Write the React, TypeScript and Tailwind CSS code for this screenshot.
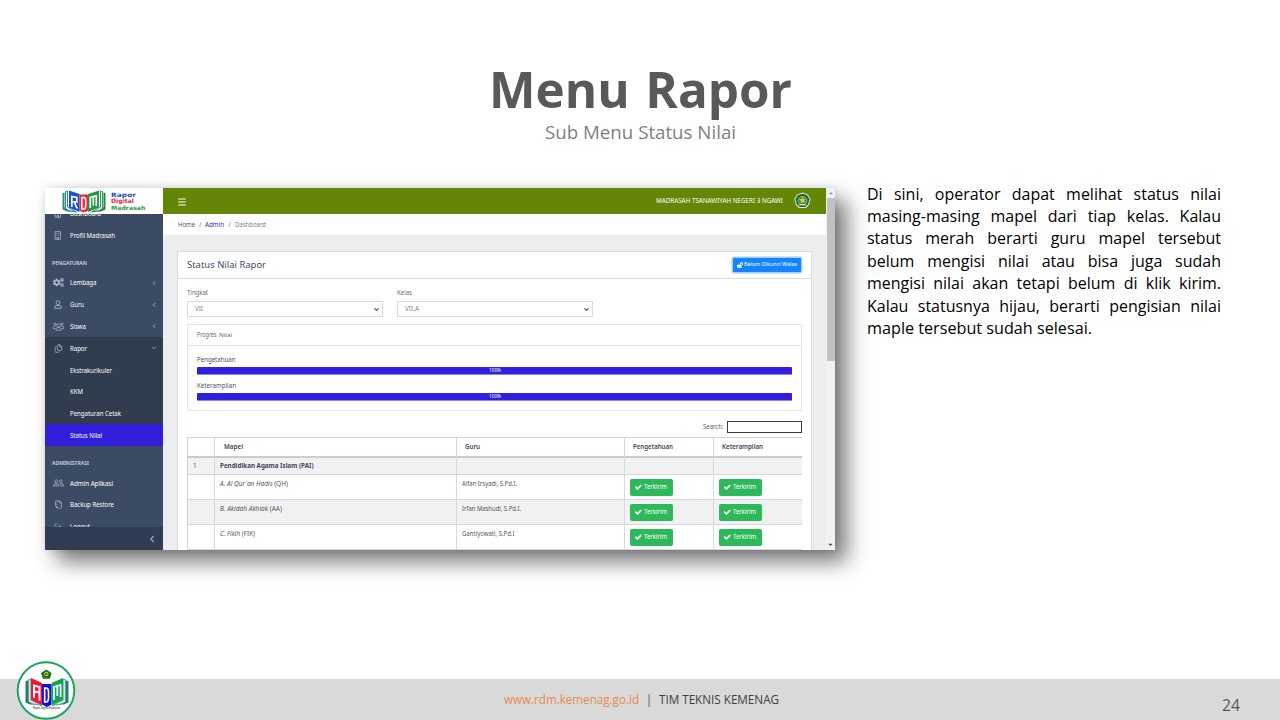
import { useLayoutEffect, useRef, useState } from "react";
import type { ReactNode } from "react";
import { ChevronDown, ChevronLeft, FileArchive, Files, LogOut, Menu } from "lucide-react";
import { FaCheck, FaLockOpen, FaCaretDown, FaCaretUp, FaCogs } from "react-icons/fa";

/** Single line of text, condensed or widened to a fixed measure. */
function Fit({ w, className = "", children }: { w: number; className?: string; children: ReactNode }) {
  const ref = useRef<HTMLSpanElement>(null);
  const [s, setS] = useState(1);
  useLayoutEffect(() => {
    if (ref.current) setS(w / ref.current.getBoundingClientRect().width);
  }, []);
  return (
    <span className={"block shrink-0 whitespace-nowrap " + className} style={{ width: w }}>
      <span ref={ref} className="inline-block origin-left" style={s === 1 ? undefined : { transform: `scaleX(${s})` }}>
        {children}
      </span>
    </span>
  );
}

function BuildingIcon() {
  return (
    <svg viewBox="0 0 16 20" className="h-[9px] w-[7.500px]" fill="none" stroke="currentColor" strokeWidth="1.900">
      <path d="M2 1.500h12v17H2zM6.500 18v-4h3v4" />
      <path d="M5 5.500h2M9 5.500h2M5 9.500h2M9 9.500h2" />
    </svg>
  );
}

function Person() {
  return (
    <svg viewBox="0 0 18 20" className="h-[9px] w-[8px]" fill="none" stroke="currentColor" strokeWidth="2">
      <rect x="5" y="1.500" width="8" height="9" rx="3.800" />
      <path d="M1.500 18.500v-2.500q0-3.500 4-3.500h7q4 0 4 3.500v2.500z" />
    </svg>
  );
}

function Duo() {
  return (
    <svg viewBox="0 0 28 20" className="h-[8px] w-[11px]" fill="none" stroke="currentColor" strokeWidth="2">
      <rect x="5" y="2" width="6.500" height="8" rx="3.200" />
      <rect x="16.500" y="2" width="6.500" height="8" rx="3.200" />
      <path d="M1.500 17.500v-2q0-3 3.500-3h6q3.500 0 3.500 3v2zM17 12.500h6q3.500 0 3.500 3v2H18" />
    </svg>
  );
}

function Trio() {
  return (
    <svg viewBox="0 0 30 24" className="h-[9px] w-[11px]" fill="none" stroke="currentColor" strokeWidth="2.200">
      <circle cx="15" cy="9" r="4.500" />
      <circle cx="5.500" cy="5.500" r="3" />
      <circle cx="24.500" cy="5.500" r="3" />
      <path d="M8 22v-3q0-4 4-4h6q4 0 4 4v3zM6 18H1v-4q0-3 4-3h2M24 18h5v-4q0-3-4-3h-2" />
    </svg>
  );
}

function Row({ icon, label, w, arrow, className = "" }: { icon?: ReactNode; label: string; w: number; arrow?: ReactNode; className?: string }) {
  return (
    <div className={"flex h-[21.8px] shrink-0 items-center pl-[7px] pr-[6px] text-white " + className}>
      <span className="flex w-[18px] shrink-0 justify-start text-[#aab3c0]">
        <span className="flex w-[12px] justify-center">{icon}</span>
      </span>
      <Fit w={w} className="mt-[1.500px] text-[6.400px] leading-none">{label}</Fit>
      <span className="ml-auto text-[#b5bdc9]">{arrow}</span>
    </div>
  );
}

function Section({ label, w }: { label: string; w: number }) {
  return (
    <div className="flex h-[25.800px] shrink-0 items-center pl-[7px] pt-[9px] text-[#d3d8df]">
      <Fit w={w} className="text-[5.200px] font-semibold leading-none">{label}</Fit>
    </div>
  );
}

function BookLogo() {
  return (
    <svg viewBox="0 0 44 24" className="h-[24px] w-[44px]">
      <path d="M.5 4l2-.5v15l11 4H5l-4.500-2z" fill="#2c8a87" />
      <path d="M3.500 2.500l2-.5v16l9 5-8-1.500-3-2z" fill="#e2f3f0" stroke="#29788d" strokeWidth=".9" />
      <path d="M43.500 4l-2-.5v15l-11 4H39l4.500-2z" fill="#178b53" />
      <path d="M40.500 2.500l-2-.5v16l-9 5 8-1.500 3-2z" fill="#dff3e6" stroke="#26854d" strokeWidth=".9" />
      <path d="M7 1.500l10.500 3.500v18L7 18.500z" fill="#1552d5" />
      <path d="M17.500 5.500h8.500v16.500l-4.200 1.500-4.300-1.500z" fill="#e6303c" />
      <path d="M26 5l11-3.500v17L26 23z" fill="#219a45" />
      <path d="M9.800 18V7.500l5 1v4.500l-5-.5m2.500.5l2.800 6.500" fill="none" stroke="#fff" strokeWidth="1.700" />
      <path d="M19.800 8.500h1.700q2.200 0 2.200 3v5q0 3.500-2.200 3.500h-1.700z" fill="none" stroke="#fff" strokeWidth="1.500" />
      <path d="M28.300 19V8.300l3-.8v9m0-9l3-.8V17" fill="none" stroke="#fff" strokeWidth="1.600" />
    </svg>
  );
}

function Emblem() {
  return (
    <svg viewBox="0 0 18 18" className="h-[17px] w-[17px]">
      <path d="M9 1l5.500 2.300 2.500 4.200-1.500 6-3 2.800h-7l-3-2.800L1 7.500l2.500-4.200z" fill="#17652d" stroke="#e3edd0" strokeWidth="1.100" />
      <circle cx="9" cy="9.300" r="4.600" fill="#447f3b" stroke="#b9cda0" strokeWidth=".9" />
      <path d="M9 5l1 2.500 2.500.2-1.800 1.800.6 2.500L9 10.800 6.700 12l.6-2.500-1.800-1.800L8 7.500z" fill="#d9cc54" />
      <path d="M5 14q4-1.500 8 0" fill="none" stroke="#e7eccf" strokeWidth="1.200" />
    </svg>
  );
}

function Seal() {
  return (
    <svg viewBox="0 0 60 60" className="h-[60px] w-[60px]">
      <circle cx="30" cy="30.500" r="28.300" fill="#fff" stroke="#17a65b" strokeWidth="1.900" />
      <path d="M9.500 21l2.500-.5v20l14 4H14l-4.500-2zM52.500 21l-2.500-.5v20l-14 4h12l4.500-2z" fill="#267b7a" />
      <path d="M12.500 19.500l2.500-.5v21l11 5.500-9-1.500-4.500-2zM49.500 19.500l-2.500-.5v21l-11 5.500 9-1.500 4.500-2z" fill="#cce8dc" stroke="#3b948c" strokeWidth=".8" />
      <path d="M15 18l11 5v22l-11-5z" fill="#ef1835" />
      <path d="M26 24h9.500v20.500L31 47l-5-2.500z" fill="#170be6" />
      <path d="M35.500 23L47 18v22l-11.500 5z" fill="#10a350" />
      <path d="M18 38V25.500l5.500 1.500v13.500M18 31.500l5.500 1" fill="none" stroke="#fff" strokeWidth="1.900" />
      <path d="M28.700 28h1.300q2.500 0 2.500 3.500v6q0 4.500-2.500 4.500h-1.300z" fill="none" stroke="#fff" strokeWidth="1.600" />
      <path d="M38 40V27l3.300-1v10m0-10l3.300-1V37" fill="none" stroke="#fff" strokeWidth="1.700" />
      <path d="M30.300 9.500l5.300 3.600-1.700 5.700h-7L25 13.100z" fill="#167425" />
      <circle cx="30.300" cy="14" r="2.200" fill="#c5bd28" />
      <circle cx="30.300" cy="14" r="1.100" fill="#167425" />
      <text x="30.500" y="49.300" textAnchor="middle" fontSize="2.600" fontFamily="Liberation Sans" fill="#222">Rapor Digital Madrasah</text>
    </svg>
  );
}

function Sidebar() {
  return (
    <aside className="flex w-[118px] shrink-0 flex-col bg-[#3c4b64]">
      <div className="flex h-[26px] shrink-0 items-center gap-[4.500px] bg-white pl-[17px]">
        <BookLogo />
        <div className="flex flex-col pt-[1px] text-[6px] font-bold leading-[6.500px]" style={{ fontFamily: "'DejaVu Sans', sans-serif" }}>
          <Fit w={25} className="text-[#204bbd]">Rapor</Fit>
          <Fit w={23} className="text-[#e12a34]">Digital</Fit>
          <Fit w={34.500} className="text-[#2b9a3f]">Madrasah</Fit>
        </div>
      </div>
      <nav className="flex h-[313px] shrink-0 flex-col overflow-hidden">
        <Row icon={<BuildingIcon />} label="Dashboard" w={31} className="-mt-[11.500px]" />
        <Row icon={<BuildingIcon />} label="Profil Madrasah" w={45} />
        <Section label="PENGATURAN" w={35} />
        <Row icon={<FaCogs size={11} />} label="Lembaga" w={26.500} arrow={<ChevronLeft size={6} strokeWidth={3} />} />
        <Row icon={<Person />} label="Guru" w={14} arrow={<ChevronLeft size={6} strokeWidth={3} />} />
        <Row icon={<Trio />} label="Siswa" w={16} arrow={<ChevronLeft size={6} strokeWidth={3} />} />
        <div className="flex shrink-0 flex-col bg-[#303c50]">
          <Row icon={<Files size={9} />} label="Rapor" w={17} arrow={<ChevronDown size={6} strokeWidth={3} />} />
          <Row label="Ekstrakurikuler" w={42} />
          <Row label="KKM" w={13} />
          <Row label="Pengaturan Cetak" w={51} />
          <Row label="Status Nilai" w={32} className="bg-[#321fdb]" />
        </div>
        <Section label="ADMINISTRASI" w={37} />
        <Row icon={<Duo />} label="Admin Aplikasi" w={43} />
        <Row icon={<FileArchive size={9} />} label="Backup Restore" w={44} />
        <Row icon={<LogOut size={8} />} label="Logout" w={20} />
      </nav>
      <div className="flex flex-1 items-center justify-end bg-[#303c54] pr-[6px] text-[#a0a8b5]">
        <ChevronLeft size={10} strokeWidth={3} />
      </div>
    </aside>
  );
}

function SelectBox({ label, lw, value, vw }: { label: string; lw: number; value: string; vw: number }) {
  return (
    <div className="flex w-[196px] flex-col">
      <Fit w={lw} className="h-[13.500px] text-[6.200px] leading-[10px] text-[#626b79]">{label}</Fit>
      <div className="flex h-[16px] items-center justify-between border border-[#d8dbe0] pl-[7px] pr-[2px]">
        <Fit w={vw} className="text-[6.200px] leading-none text-[#768192]">{value}</Fit>
        <ChevronDown size={7} strokeWidth={4.500} color="#5c6470" />
      </div>
    </div>
  );
}

function Progress({ label, w }: { label: string; w: number }) {
  return (
    <div className="flex h-[26px] flex-col">
      <Fit w={w} className="h-[12.500px] text-[6.400px] leading-[9px] text-[#4a5465]">{label}</Fit>
      <div className="flex h-[7.500px] items-center justify-center rounded-[1px] border-b border-[#8d83ea] bg-[#321fdb] text-white">
        <Fit w={12} className="text-[5px] leading-none">100%</Fit>
      </div>
    </div>
  );
}

function Sent() {
  return (
    <div className="flex h-[17px] w-[43px] items-center justify-center gap-[2px] rounded-[2px] bg-[#2eb85c] text-white">
      <FaCheck size={6.500} stroke="currentColor" strokeWidth={50} />
      <Fit w={23} className="text-[6.200px] leading-none">Terkirim</Fit>
    </div>
  );
}

const subjects = [
  { name: "A. Al Qur`an Hadis", code: "(QH)", w: 68, teacher: "Alfan Irsyadi, S.Pd.I.", tw: 55, bg: "bg-white" },
  { name: "B. Akidah Akhlak", code: "(AA)", w: 62, teacher: "Irfan Mashudi, S.Pd.I.", tw: 59, bg: "bg-[#f1f1f1]" },
  { name: "C. Fikih", code: "(FIK)", w: 35, teacher: "Gantiyowati, S.Pd.I", tw: 52.500, bg: "bg-white" },
];

const columns = "grid grid-cols-[26.500px_242px_168px_89px_88.500px] divide-x divide-[#d5d8de] ";

function ScoreTable() {
  return (
    <div className="flex flex-col border-l border-t border-[#d0d3d9] text-[6.200px] leading-[9px] text-[#4f5868]">
      <div className={columns + "h-[20px] border-b-2 border-[#c8cbd1] font-semibold text-[#3c4658]"}>
        <div />
        <div className="flex items-center pl-[9px]"><Fit w={19}>Mapel</Fit></div>
        <div className="flex items-center pl-[8.500px]"><Fit w={15}>Guru</Fit></div>
        <div className="flex items-center pl-[8.500px]"><Fit w={40}>Pengetahuan</Fit></div>
        <div className="flex items-center pl-[8.500px]"><Fit w={41}>Keterampilan</Fit></div>
      </div>
      <div className={columns + "h-[17.500px] border-b border-[#d5d8de] bg-[#f1f1f1]"}>
        <div className="flex items-center pl-[5px]">1</div>
        <div className="flex items-center pl-[5px] font-bold text-[#3c4658]"><Fit w={93.500}>Pendidikan Agama Islam (PAI)</Fit></div>
        <div />
        <div />
        <div />
      </div>
      {subjects.map((s) => (
        <div key={s.name} className={columns + "h-[25.100px] border-b border-[#d5d8de] " + s.bg}>
          <div />
          <div className="pl-[5px] pt-[3.500px]"><Fit w={s.w}><i>{s.name}</i> {s.code}</Fit></div>
          <div className="pl-[5px] pt-[3.500px]"><Fit w={s.tw}>{s.teacher}</Fit></div>
          <div className="pl-[5px] pt-[3.500px]"><Sent /></div>
          <div className="pl-[5px] pt-[3.500px]"><Sent /></div>
        </div>
      ))}
    </div>
  );
}

function Dashboard() {
  return (
    <section
      className="ml-[45px] flex h-[362px] w-[790px] shrink-0 overflow-hidden bg-white shadow-[12px_12px_20px_0px_rgba(0,0,0,0.52),0_0_8px_rgba(0,0,0,0.12)]"
      style={{ fontFamily: "'Noto Sans', sans-serif" }}
    >
      <Sidebar />
      <div className="flex w-[663px] shrink-0 flex-col bg-[#ebedef]">
        <header className="flex h-[25.500px] shrink-0 items-center bg-[#638606] pl-[14px] pr-[15px] text-white">
          <Menu size={10} strokeWidth={2.500} className="mt-[3px]" />
          <Fit w={127} className="ml-auto mr-[11px] mt-[2px] text-[6.600px] leading-none">MADRASAH TSANAWIYAH NEGERI 3 NGAWI</Fit>
          <Emblem />
        </header>
        <div className="flex h-[21.500px] shrink-0 items-center gap-[4px] bg-white pl-[15px] pt-[2px] text-[6.600px] leading-none text-[#768192]">
          <Fit w={17} className="text-[#4c5666]">Home</Fit>
          <span>/</span>
          <Fit w={19} className="text-[#321fdb]">Admin</Fit>
          <span>/</span>
          <Fit w={31}>Dashboard</Fit>
        </div>
        <main className="ml-[14px] mt-[16px] flex h-[320px] w-[635px] shrink-0 flex-col border border-[#d8dbe0] bg-white">
          <div className="flex h-[27px] shrink-0 items-center justify-between border-b border-[#d8dbe0] pl-[9px] pr-[10px]">
            <Fit w={79} className="text-[9.800px] leading-none text-[#3c4b64]">Status Nilai Rapor</Fit>
            <div className="flex h-[14px] w-[68px] items-center justify-center gap-[1px] rounded-[1px] bg-[#1485ff] text-white shadow-[0_0_0_1.500px_#9fd0ff]">
              <FaLockOpen size={6} />
              <Fit w={53} className="text-[5.800px] leading-none">Belum Dikunci Walas</Fit>
            </div>
          </div>
          <div className="flex w-[624px] flex-col pl-[9px] pt-[8.500px]">
            <div className="flex gap-[14px]">
              <SelectBox label="Tingkat" lw={21} value="VII" vw={8} />
              <SelectBox label="Kelas" lw={15} value="VII.A" vw={14} />
            </div>
            <div className="mt-[7px] flex h-[86.500px] flex-col border border-[#e2e4e8]">
              <div className="flex h-[21px] items-center border-b border-[#e2e4e8] pl-[9px] leading-none text-[#5d6675]">
                <Fit w={19.500} className="text-[6.200px]">Progres</Fit>
                <Fit w={13} className="ml-[2px] text-[5px]">Nilai</Fit>
              </div>
              <div className="flex flex-col px-[9px] pt-[8.500px]">
                <Progress label="Pengetahuan" w={38.500} />
                <Progress label="Keterampilan" w={39} />
              </div>
            </div>
            <div className="mb-[3.500px] mt-[10px] flex h-[12.500px] items-center justify-end gap-[3.500px] text-[#555e6c]">
              <Fit w={20.500} className="text-[6.200px] leading-none">Search:</Fit>
              <div className="h-[12px] w-[75.500px] border border-[#3c3c3c]" />
            </div>
            <ScoreTable />
          </div>
        </main>
      </div>
      <div className="flex w-[9px] shrink-0 flex-col items-center bg-[#f1f1f1]">
        <FaCaretUp size={6} color="#8c8c8c" className="my-[2px] shrink-0" />
        <div className="h-[163px] w-[8px] shrink-0 bg-[#c1c1c1]" />
        <FaCaretDown size={7} color="#444" className="mb-[2px] mt-auto shrink-0" />
      </div>
    </section>
  );
}

const lines = [
  "Di sini, operator dapat melihat status nilai",
  "masing-masing mapel dari tiap kelas. Kalau",
  "status merah berarti guru mapel tersebut",
  "belum mengisi nilai atau bisa juga sudah",
  "mengisi nilai akan tetapi belum di klik kirim.",
  "Kalau statusnya hijau, berarti pengisian nilai",
];

export default function App() {
  return (
    <div className="flex h-[720px] w-[1280px] flex-col overflow-hidden bg-white" style={{ fontFamily: "'Open Sans', sans-serif" }}>
      <div className="flex h-[188px] shrink-0 flex-col items-center pt-[57px]">
        <h1 className="text-[51px] font-bold leading-[62px] text-[#595959] [word-spacing:3px]"><Fit w={303}>Menu Rapor</Fit></h1>
        <h2 className="mt-[1px] text-[18.800px] font-[370] leading-[24px] text-[#7f7f7f]"><Fit w={191}>Sub Menu Status Nilai</Fit></h2>
      </div>
      <div className="flex h-[491px] shrink-0">
        <Dashboard />
        <div className="-mt-[5.500px] ml-[32px] text-[17px] leading-[22.400px] text-black">
          <div className="w-[376.600px] origin-left scale-x-[0.940]">
            {lines.map((l) => (
              <p key={l} className="whitespace-nowrap text-justify [text-align-last:justify]">{l}</p>
            ))}
          </div>
          <Fit w={225}>maple tersebut sudah selesai.</Fit>
        </div>
      </div>
      <footer className="flex h-[41px] shrink-0 items-center bg-[#d9d9d9] text-[12.800px] font-[370] leading-none">
        <div className="-mt-[20px] ml-[16px]"><Seal /></div>
        <Fit w={135} className="-mt-[1px] ml-[428px] text-[#e68a4c]">www.rdm.kemenag.go.id</Fit>
        <span className="-mt-[1px] mx-[6.500px] text-[#595959]">|</span>
        <Fit w={120} className="-mt-[1px] text-[#404040]">TIM TEKNIS KEMENAG</Fit>
        <Fit w={18} className="ml-auto mr-[40px] mt-[11px] text-[16px] font-normal text-[#595959]">24</Fit>
      </footer>
    </div>
  );
}
